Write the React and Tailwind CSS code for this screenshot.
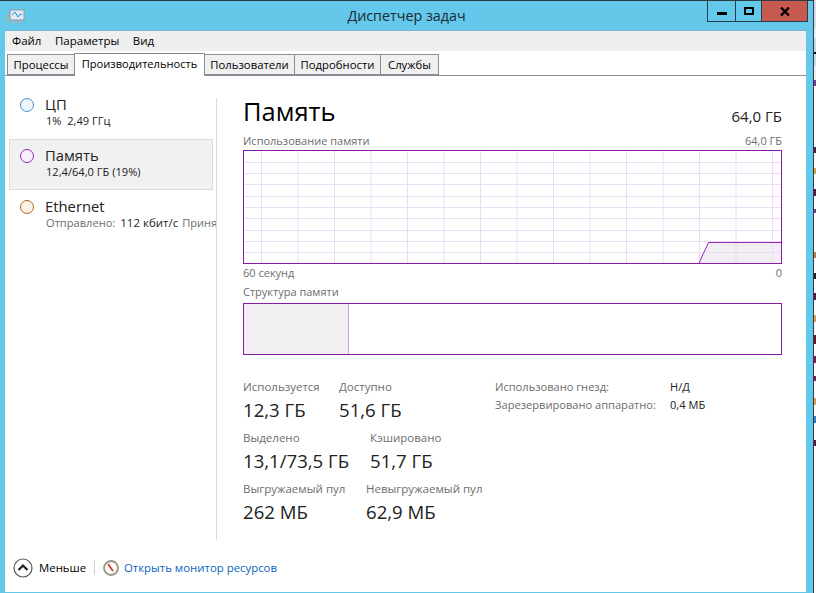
const FONT = "font-['Open_Sans','Noto_Sans',sans-serif]";

const tabs = [
  { label: "Процессы", w: "w-[68px]" },
  { label: "Производительность", w: "w-[131px]", active: true },
  { label: "Пользователи", w: "w-[91px]" },
  { label: "Подробности", w: "w-[87px]" },
  { label: "Службы", w: "w-[59px]" },
];

const AppIcon = () => (
  <svg width="18" height="16" viewBox="0 0 18 16">
    <rect x="0" y="5" width="2" height="9" fill="#a9b7a0" />
    <rect x="3" y="1" width="14" height="10" fill="#dfeaf3" stroke="#8a99a8" />
    <path d="M5 6 L8 3 L11 8 L13 5 L15 6" fill="none" stroke="#2f8fd8" />
    <rect x="6" y="12" width="8" height="2" fill="#a8b2ba" />
  </svg>
);

const Tab = ({ label, w, active }) => (
  <div
    className={
      active
        ? `${w} h-[23px] -mb-px -ml-px relative bg-white border border-b-0 border-[#898c95] flex justify-center pt-[2px] text-[11.1px] text-black whitespace-nowrap`
        : `${w} h-[21px] bg-[#f0f0f0] border border-[#898c95] -ml-px flex justify-center pt-[2px] text-[11.3px] text-black whitespace-nowrap`
    }
  >
    {label}
  </div>
);

const Circle = ({ border, fill }) => (
  <div className={`w-[14px] h-[14px] rounded-full border ${border} ${fill} shrink-0 mt-[1px]`} />
);

const SideItem = ({ title, border, fill, selected, children }) => (
  <div
    className={
      selected
        ? "h-[51px] border border-[#dcdcdc] bg-[#f1f1f1] flex pl-[10px] pt-[8px] gap-[11px]"
        : "h-[51px] border border-transparent flex pl-[10px] pt-[8px] gap-[11px]"
    }
  >
    <Circle border={border} fill={fill} />
    <div className="min-w-0 whitespace-nowrap">
      <div className="text-[14.8px] leading-[17px] -mt-[1px] text-[#222]">{title}</div>
      <div className="text-[11.1px] leading-[16px] pl-px text-[#222]">{children}</div>
    </div>
  </div>
);

const Stat = ({ label, value, className = "" }) => (
  <div className={`whitespace-nowrap ${className}`}>
    <div className="text-[11.5px] leading-[16px] text-[#6d6d6d]">{label}</div>
    <div className="text-[18.6px] leading-[24px] mt-[3px] text-[#222]">{value}</div>
  </div>
);

const hLines = [12, 23, 34, 46, 57, 68, 80, 91, 102];
const vLines = [18, 54.5, 91, 127.5, 164, 200.5, 237, 273.5, 310, 346.5, 383, 419.5, 456, 492.5, 529];

const UsageChart = () => (
  <svg width="539" height="114" viewBox="0 0 539 114" className="block">
    <rect x="0" y="0" width="539" height="114" fill="#fff" />
    <path d="M456 113 L465.5 92 L539 92 L539 113 Z" fill="#f1eff3" />
    {hLines.map((y) => (
      <line key={y} x1="0" x2="539" y1={y + 0.5} y2={y + 0.5} stroke="#ecdcf3" />
    ))}
    {vLines.map((x) => (
      <line key={x} y1="0" y2="114" x1={x + 0.5} x2={x + 0.5} stroke="#ecdcf3" />
    ))}
    <path d="M456 113 L465.5 92.5 L539 92.5" fill="none" stroke="#9528b4" />
    <rect x="0.5" y="0.5" width="538" height="113" fill="none" stroke="#8b1aab" />
  </svg>
);

// clipped bits of whatever window lies behind this one
const Sliver = () => (
  <div className="w-[2px] bg-white flex flex-col">
    <div className="h-[28px] bg-[#d8dcec]" />
    <div className="h-[10px] bg-[#eef0f6]" />
    <div className="h-[14px] bg-[#c8dce0]" />
    <div className="h-[2px] bg-black" />
    <div className="h-[12px] bg-[#c8dce0]" />
    <div className="h-[14px] bg-[#f0f0f0]" />
    <div className="h-[6px] bg-[#7a3a90]" />
    <div className="h-[61px]" />
    <div className="h-[6px] bg-[#5a1a3a]" />
    <div className="h-[15px]" />
    <div className="h-[6px] bg-[#d8a040]" />
    <div className="h-[15px]" />
    <div className="h-[7px] bg-[#5a1a3a]" />
    <div className="h-[13px]" />
    <div className="h-[4px] bg-[#7a3a90]" />
    <div className="h-[39px]" />
    <div className="h-[6px] bg-[#c08040]" />
    <div className="h-[15px]" />
    <div className="h-[6px] bg-[#222]" />
    <div className="h-[14px]" />
    <div className="h-[7px] bg-[#5a1a3a]" />
    <div className="h-[15px]" />
    <div className="h-[7px] bg-[#d8a040]" />
    <div className="h-[13px]" />
    <div className="h-[9px] bg-[#6a1a2a]" />
    <div className="h-[12px]" />
    <div className="h-[7px] bg-[#8a1a4a]" />
    <div className="h-[13px]" />
    <div className="h-[5px] bg-[#8a1a4a]" />
    <div className="h-[17px]" />
    <div className="h-[7px] bg-[#d8a040]" />
    <div className="h-[11px]" />
    <div className="h-[7px] bg-[#3a80c8]" />
    <div className="h-[17px]" />
    <div className="h-[6px] bg-[#5a1a3a]" />
  </div>
);

export default function App() {
  return (
    <div className={`w-[816px] h-[593px] overflow-hidden flex bg-white ${FONT}`}>
      <div className="w-[814px] h-full flex flex-col bg-[#63c8ea] border-t border-r border-[#2e3b45]">
        {/* title bar */}
        <div className="h-[29px] shrink-0 grid grid-cols-[1fr_auto_1fr]">
          <div className="pl-[7px] pt-[8px]">
            <AppIcon />
          </div>
          <div className="text-[14.3px] text-[#1b2a33] pt-[4px]">Диспетчер задач</div>
          <div className="flex justify-end pr-[5px]">
            <div className="h-[21px] flex border-x border-b border-[#2b3d4c]">
              <div className="w-[28px] flex justify-center items-center border-r border-[#2b3d4c]">
                <div className="w-[10px] h-[3px] mt-[5px] bg-black" />
              </div>
              <div className="w-[25px] flex justify-center items-center">
                <div className="w-[10px] h-[8px] border-2 border-black" />
              </div>
              <div className="w-[46px] flex justify-center items-center bg-[#c75a50] border-l border-[#2b3d4c]">
                <svg width="10" height="9" viewBox="0 0 10 9">
                  <path d="M1 0.5 L9 8.5 M9 0.5 L1 8.5" stroke="#000" strokeWidth="2.4" />
                </svg>
              </div>
            </div>
          </div>
        </div>

        {/* window body */}
        <div className="flex-1 ml-[5px] mr-[7px] mb-px bg-white flex flex-col min-h-0 border-t border-[#7fb4d0]">
          <div className="h-[20px] shrink-0 bg-[#efefef] flex items-center pl-[7px] gap-[13.5px] text-[11.5px] text-black">
            <span>Файл</span>
            <span>Параметры</span>
            <span>Вид</span>
          </div>

          <div className="h-[25px] shrink-0 pl-[3px] flex items-end border-b border-[#898c95]">
            {tabs.map((t) => (
              <Tab key={t.label} {...t} />
            ))}
          </div>

          <div className="flex-1 flex min-h-0">
            {/* left list */}
            <div className="w-[211px] shrink-0 pt-[12px] pl-[4px] pr-[3px] overflow-hidden">
              <SideItem title="ЦП" border="border-[#3f8fc8]" fill="bg-[#eef6fb]">
                1%&nbsp; 2,49 ГГц
              </SideItem>
              <SideItem title="Память" border="border-[#9528b4]" fill="bg-[#f8f0fb]" selected>
                12,4/64,0 ГБ (19%)
              </SideItem>
              <SideItem title="Ethernet" border="border-[#b5651d]" fill="bg-[#fbf3ec]">
                <span className="text-[#6d6d6d]">Отправлено:</span>
                <span className="ml-[5px] text-[11.5px]">112 кбит/с</span>
                <span className="ml-[4px] text-[#6d6d6d]">Приня</span>
              </SideItem>
            </div>
            <div className="w-px h-[442px] mt-[22px] bg-[#d9d9d9] shrink-0" />

            {/* right panel */}
            <div className="w-[539px] ml-[26px] pt-[19px]">
              <div className="flex justify-between items-end h-[32px]">
                <div className="text-[25.5px] leading-[32px] text-black">Память</div>
                <div className="text-[15px] leading-[20px] text-[#222] pb-[1px]">64,0 ГБ</div>
              </div>
              <div className="flex justify-between text-[11px] leading-[15px] text-[#6d6d6d] mt-[6px]">
                <span>Использование памяти</span>
                <span>64,0 ГБ</span>
              </div>
              <div className="mt-[2px]">
                <UsageChart />
              </div>
              <div className="flex justify-between text-[11px] leading-[15px] text-[#6d6d6d] mt-[1px]">
                <span>60 секунд</span>
                <span>0</span>
              </div>
              <div className="text-[11px] leading-[15px] text-[#6d6d6d] mt-[4px]">Структура памяти</div>
              <div className="mt-[4px] h-[52px] border border-[#8b1aab] flex">
                <div className="w-[105px] bg-[#f3f0f4] border-r border-[#c9a3dc]" />
              </div>

              <div className="flex mt-[24px]">
                <div className="w-[252px] flex flex-col gap-[8px]">
                  <div className="flex">
                    <Stat label="Используется" value="12,3 ГБ" className="w-[96px]" />
                    <Stat label="Доступно" value="51,6 ГБ" />
                  </div>
                  <div className="flex">
                    <Stat label="Выделено" value="13,1/73,5 ГБ" className="w-[127px]" />
                    <Stat label="Кэшировано" value="51,7 ГБ" />
                  </div>
                  <div className="flex">
                    <Stat label="Выгружаемый пул" value="262 МБ" className="w-[123px]" />
                    <Stat label="Невыгружаемый пул" value="62,9 МБ" />
                  </div>
                </div>
                <div className="text-[11.1px] leading-[18px] text-[#222] whitespace-nowrap -mt-[1px]">
                  <div className="flex">
                    <span className="w-[175px] text-[#6d6d6d]">Использовано гнезд:</span>
                    <span>Н/Д</span>
                  </div>
                  <div className="flex">
                    <span className="w-[175px] text-[#6d6d6d]">Зарезервировано аппаратно:</span>
                    <span>0,4 МБ</span>
                  </div>
                </div>
              </div>
            </div>
          </div>

          {/* footer */}
          <div className="h-[52px] shrink-0 flex items-center pl-[8px] pt-[3px]">
            <svg width="20" height="20" viewBox="0 0 20 20">
              <circle cx="10" cy="10" r="9" fill="#fff" stroke="#555" strokeWidth="1.2" />
              <path d="M5.5 12 L10 7.5 L14.5 12" fill="none" stroke="#222" strokeWidth="2.2" />
            </svg>
            <span className="ml-[6px] w-[47px] text-[11.4px] text-black whitespace-nowrap">Меньше</span>
            <div className="w-px h-[15px] bg-[#cfcfcf] ml-[8px]" />
            <svg width="16" height="16" viewBox="0 0 16 16" className="ml-[8px]">
              <circle cx="8" cy="8" r="7" fill="#fbfaf6" stroke="#9a9588" strokeWidth="1.8" />
              <path d="M5 4 L10 11" stroke="#c8372a" strokeWidth="1.6" />
            </svg>
            <span className="ml-[5px] text-[11.4px] text-[#0a66c2] whitespace-nowrap">Открыть монитор ресурсов</span>
          </div>
        </div>
      </div>
      <Sliver />
    </div>
  );
}
